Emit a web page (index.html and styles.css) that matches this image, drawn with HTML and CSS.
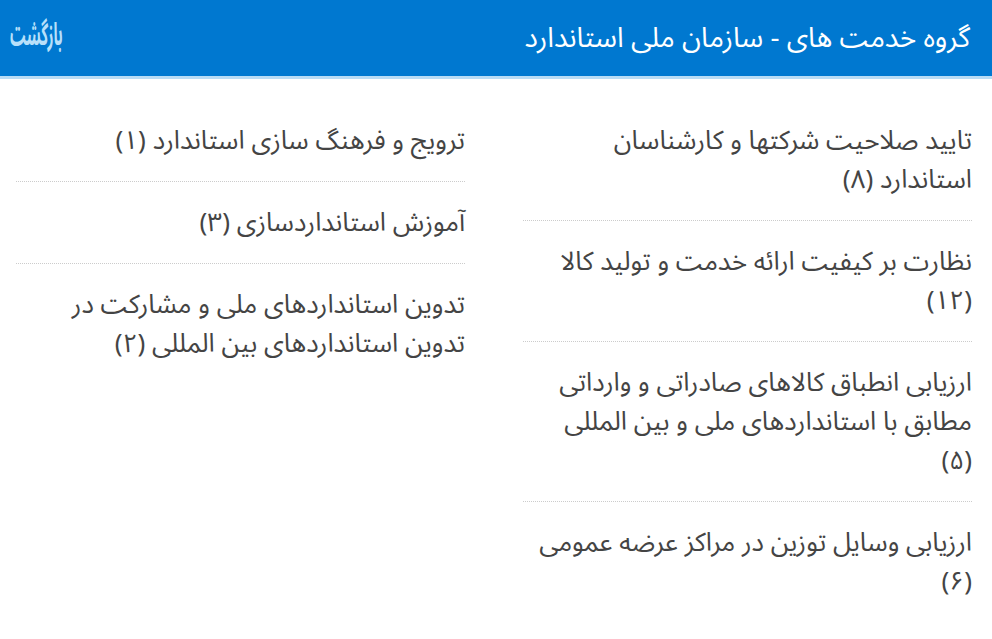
FILE: index.html
```html
<!DOCTYPE html>
<html lang="fa" dir="rtl">
<head>
    <meta charset="UTF-8">
    <meta name="viewport" content="width=device-width, initial-scale=1.0">
    <title>گروه خدمت های - سازمان ملی استاندارد</title>
    <link rel="stylesheet" href="styles.css">
</head>
<body>

    <header class="top-bar">
        <h1 class="page-title">گروه خدمت های - سازمان ملی استاندارد</h1>
        <a href="#" class="back-link">بازگشت</a>
    </header>

    <div class="groups">
        <ul class="group-list">
            <li><a href="#">تایید صلاحیت شرکتها و کارشناسان استاندارد (۸)</a></li>
            <li><a href="#">نظارت بر کیفیت ارائه خدمت و تولید کالا (۱۲)</a></li>
            <li><a href="#">ارزیابی انطباق کالاهای صادراتی و وارداتی مطابق با استانداردهای ملی و بین المللی (۵)</a></li>
            <li><a href="#">ارزیابی وسایل توزین در مراکز عرضه عمومی (۶)</a></li>
        </ul>
        <ul class="group-list">
            <li><a href="#">ترویج و فرهنگ سازی استاندارد (۱)</a></li>
            <li><a href="#">آموزش استانداردسازی (۳)</a></li>
            <li><a href="#">تدوین استانداردهای ملی و مشارکت در تدوین استانداردهای بین المللی (۲)</a></li>
        </ul>
    </div>

</body>
</html>
```

FILE: styles.css
```css
body {
    font-family: "Noto Sans Arabic", "DejaVu Sans", sans-serif;
    margin: 0;
    padding: 0;
    background-color: #fff;
    color: #444;
}

.top-bar {
    display: flex;
    justify-content: space-between;
    align-items: center;
    height: 76px;
    padding: 0 22px 0 10px;
    background-color: #0078d0;
    border-bottom: 3px solid #b8dcf5;
}

.page-title {
    margin: 0;
    font-size: 28px;
    font-weight: normal;
    color: #fff;
}

/* the original logo-ish font is very narrow, squeeze it */
.back-link {
    display: inline-block;
    margin-top: -6px;
    font-size: 31px;
    font-weight: bold;
    color: #b8e0fa;
    text-decoration: none;
    transform: scaleX(0.47);
    transform-origin: left center;
}

.groups {
    display: grid;
    grid-template-columns: 1fr 1fr;
    column-gap: 58px;
    padding: 21px 20px 0 16px;
}

.group-list {
    list-style: none;
    margin: 0;
    padding: 0;
}

.group-list li {
    padding: 21px 0;
    padding-inline-end: 6px;
    border-bottom: 1px dotted #ccc;
    font-size: 26px;
    line-height: 39px;
}

.group-list li:last-child {
    border-bottom: none;
}

.group-list a {
    color: #444;
    text-decoration: none;
}
```
